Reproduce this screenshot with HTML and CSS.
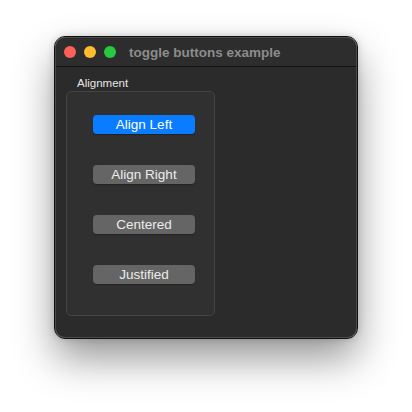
FILE: index.html
```html
<!DOCTYPE html>
<html>
<head>
<meta charset="utf-8">
<link rel="stylesheet" href="styles.css">
</head>
<body>
<div class="window">
  <div class="titlebar">
    <div class="lights">
      <span class="light red"></span>
      <span class="light yellow"></span>
      <span class="light green"></span>
    </div>
    <div class="title">toggle buttons example</div>
  </div>
  <div class="content">
    <div class="group-label">Alignment</div>
    <div class="group">
      <button class="btn active">Align Left</button>
      <button class="btn">Align Right</button>
      <button class="btn">Centered</button>
      <button class="btn">Justified</button>
    </div>
  </div>
</div>
</body>
</html>
```
FILE: styles.css
```css
html, body {
  margin: 0;
  padding: 0;
  background: #ffffff;
  width: 412px;
  height: 412px;
  overflow: hidden;
}
body {
  padding: 37px 0 0 55px;
  box-sizing: border-box;
  font-family: "Liberation Sans", Arial, sans-serif;
}
.window {
  width: 302px;
  height: 301px;
  box-sizing: border-box;
  background: #2b2b2b;
  border-radius: 10px;
  border: 1px solid #4a4a4a;
  outline: 1px solid #111;
  box-shadow: 0 20px 40px rgba(0,0,0,0.42), 0 0 8px rgba(0,0,0,0.22);
  overflow: hidden;
  display: flex;
  flex-direction: column;
}
.titlebar {
  height: 28px;
  display: flex;
  align-items: center;
  border-bottom: 1px solid #121212;
  background: #2d2d2d;
  flex-shrink: 0;
}
.lights {
  display: flex;
  gap: 8px;
  padding-left: 8px;
}
.light {
  width: 12px;
  height: 12px;
  border-radius: 50%;
  display: block;
}
.red { background: #fe5f57; }
.yellow { background: #febc2e; }
.green { background: #28c840; }
.title {
  margin-left: 13px;
  color: #8c8c8c;
  font-weight: bold;
  font-size: 13.5px;
}
.content {
  padding: 10px 0 0 10px;
}
.group-label {
  color: #e6e6e6;
  font-size: 11.5px;
  margin-left: 11px;
  line-height: 13px;
}
.group {
  margin-top: 1px;
  width: 149px;
  height: 225px;
  box-sizing: border-box;
  border: 1px solid #444444;
  border-radius: 5px;
  background: #303030;
  padding: 23px 0 0 26px;
  display: flex;
  flex-direction: column;
  gap: 31px;
}
.btn {
  width: 102px;
  height: 19px;
  border: none;
  border-radius: 4px;
  background: #656565;
  color: #ececec;
  font-family: "Liberation Sans", Arial, sans-serif;
  font-size: 13.5px;
  padding: 0;
  line-height: 19px;
  box-shadow: 0 1px 1px rgba(0,0,0,0.3);
}
.btn.active {
  background: #0a7cff;
  color: #ffffff;
}
```
